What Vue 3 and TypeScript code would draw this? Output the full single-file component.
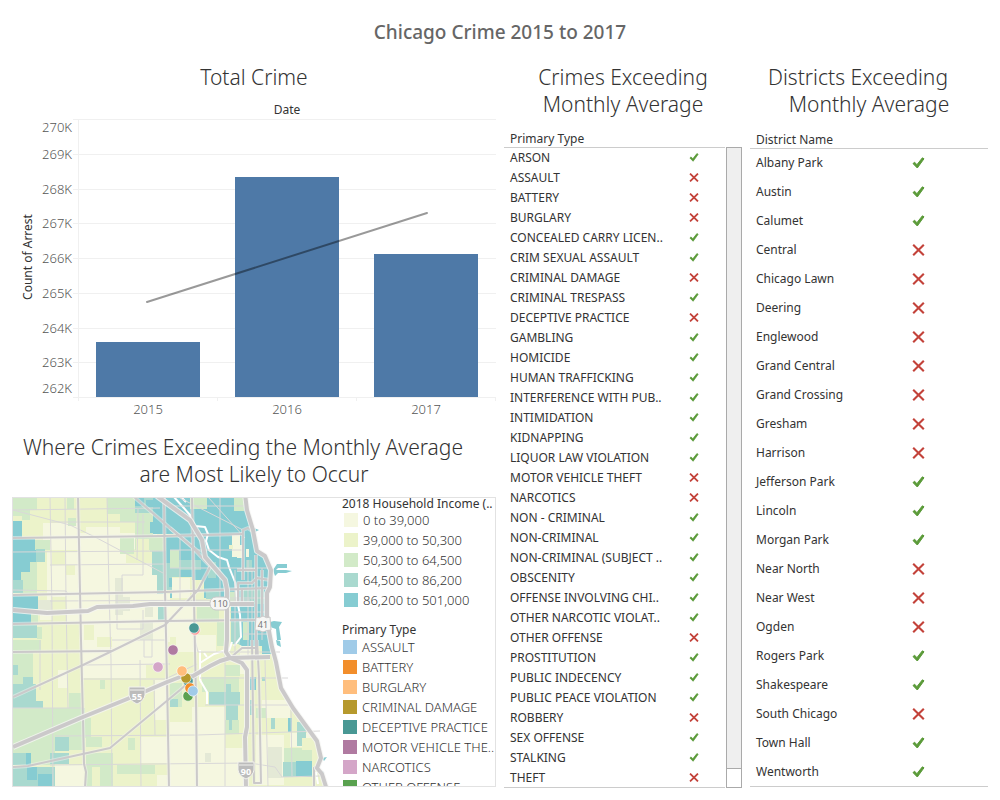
<script setup lang="ts">
interface Mark { name: string; ok: boolean }

const parse = (src: string): Mark[] =>
  src.split('|').map((s) => ({ name: s.slice(1), ok: s[0] === '+' }))

const crimes = parse(
  '+ARSON|-ASSAULT|-BATTERY|-BURGLARY|+CONCEALED CARRY LICEN..|+CRIM SEXUAL ASSAULT|-CRIMINAL DAMAGE|+CRIMINAL TRESPASS|-DECEPTIVE PRACTICE|+GAMBLING|+HOMICIDE|+HUMAN TRAFFICKING|+INTERFERENCE WITH PUB..|+INTIMIDATION|+KIDNAPPING|+LIQUOR LAW VIOLATION|-MOTOR VEHICLE THEFT|-NARCOTICS|+NON - CRIMINAL|+NON-CRIMINAL|+NON-CRIMINAL (SUBJECT ..|+OBSCENITY|+OFFENSE INVOLVING CHI..|+OTHER NARCOTIC VIOLAT..|-OTHER OFFENSE|+PROSTITUTION|+PUBLIC INDECENCY|+PUBLIC PEACE VIOLATION|-ROBBERY|+SEX OFFENSE|+STALKING|-THEFT'
)
const districts = parse(
  '+Albany Park|+Austin|+Calumet|-Central|-Chicago Lawn|-Deering|-Englewood|-Grand Central|-Grand Crossing|-Gresham|-Harrison|+Jefferson Park|+Lincoln|+Morgan Park|-Near North|-Near West|-Ogden|+Rogers Park|+Shakespeare|-South Chicago|+Town Hall|+Wentworth'
)

const grid = [28, 63, 98, 132, 167, 202, 237, 271, 306]
const ticks = [
  { t: '270K', y: 41 }, { t: '269K', y: 68 }, { t: '268K', y: 103 },
  { t: '267K', y: 137 }, { t: '266K', y: 172 }, { t: '265K', y: 207 },
  { t: '264K', y: 242 }, { t: '263K', y: 276 }, { t: '262K', y: 302 },
]
const bars = [
  { year: '2015', x: 84, y: 251 },
  { year: '2016', x: 223, y: 86 },
  { year: '2017', x: 362, y: 163 },
]

const incomes = [
  { c: '#f5f7e0', t: '0 to 39,000' },
  { c: '#ecf3ca', t: '39,000 to 50,300' },
  { c: '#d2eac8', t: '50,300 to 64,500' },
  { c: '#a9d9cf', t: '64,500 to 86,200' },
  { c: '#86ccd2', t: '86,200 to 501,000' },
]
const types = [
  { c: '#a0cbe8', t: 'ASSAULT' },
  { c: '#f28e2b', t: 'BATTERY' },
  { c: '#ffbe7d', t: 'BURGLARY' },
  { c: '#b6992d', t: 'CRIMINAL DAMAGE' },
  { c: '#499894', t: 'DECEPTIVE PRACTICE' },
  { c: '#b07aa1', t: 'MOTOR VEHICLE THE..' },
  { c: '#d4a6c8', t: 'NARCOTICS' },
  { c: '#59a14f', t: 'OTHER OFFENSE' },
]

const shades = ['#e4e9d6', '#f5f7e0', '#ecf3ca', '#d2eac8', '#a9d9cf', '#86ccd2']
// Census blocks: shade index, x, y, width, height
const blocks: number[][] = [
  [1, 80, 533, 77, 118], [1, 47, 552, 33, 48], [1, 43, 523, 37, 27], [1, 86, 527, 34, 10], [1, 157, 594, 37, 48],
  [1, 40, 600, 13, 20], [1, 66, 596, 14, 27], [1, 83, 640, 63, 38], [1, 146, 640, 22, 25], [1, 145, 572, 13, 60],
  [2, 52, 550, 13, 15], [2, 126, 549, 26, 14], [2, 66, 565, 9, 10], [2, 52, 597, 14, 26], [2, 84, 625, 10, 15],
  [3, 13, 497, 24, 13], [3, 22, 510, 8, 10], [3, 13, 510, 9, 6], [3, 67, 497, 7, 12], [3, 68, 518, 8, 8],
  [5, 13, 521, 9, 16], [3, 35, 540, 15, 10], [5, 13, 539, 22, 23], [5, 33, 550, 4, 12], [4, 36, 549, 9, 13],
  [5, 13, 562, 17, 10], [3, 20, 572, 17, 22], [3, 30, 562, 7, 10], [5, 13, 572, 8, 8], [4, 13, 580, 10, 13],
  [5, 13, 596, 25, 13], [0, 38, 600, 14, 10], [5, 13, 612, 18, 11], [3, 31, 613, 7, 10], [4, 13, 625, 24, 13], [3, 37, 627, 5, 12],
  [3, 107, 497, 28, 17], [3, 120, 513, 22, 9], [4, 135, 497, 18, 18], [3, 135, 513, 18, 37], [2, 136, 539, 13, 13],
  [3, 120, 538, 14, 16], [3, 150, 536, 16, 16], [5, 153, 497, 34, 37], [5, 135, 497, 9, 9], [5, 146, 500, 9, 7], [5, 150, 522, 15, 11],
  [5, 166, 537, 20, 28], [4, 152, 551, 14, 24], [4, 157, 573, 8, 21], [4, 166, 563, 16, 27], [5, 169, 578, 9, 9],
  [5, 170, 593, 9, 7], [4, 158, 607, 7, 13], [0, 115, 578, 8, 37], [0, 123, 597, 7, 14], [0, 140, 621, 13, 19], [0, 145, 607, 8, 10],
  [2, 97, 637, 15, 10],
  [3, 13, 640, 20, 54], [3, 33, 640, 8, 12], [4, 13, 665, 5, 10], [4, 13, 684, 23, 24], [4, 23, 677, 10, 9], [4, 30, 701, 13, 7],
  [3, 13, 708, 72, 42], [3, 13, 750, 42, 15], [3, 69, 693, 12, 16], [1, 58, 670, 10, 18], [2, 43, 700, 26, 8],
  [3, 83, 718, 8, 20], [4, 55, 737, 14, 14], [4, 13, 753, 18, 12], [5, 26, 753, 5, 12], [4, 50, 753, 19, 11],
  [4, 13, 767, 42, 20], [5, 27, 767, 10, 13], [5, 38, 774, 14, 13], [1, 55, 765, 29, 22], [3, 86, 753, 27, 34], [3, 86, 737, 16, 10],
  [2, 92, 767, 8, 20], [3, 117, 765, 38, 9], [3, 128, 738, 7, 12], [1, 140, 737, 40, 26], [1, 155, 680, 12, 40], [1, 157, 775, 40, 12],
  [3, 100, 680, 5, 9], [3, 170, 683, 12, 24], [4, 170, 699, 8, 8],
  [1, 170, 707, 27, 28], [2, 170, 707, 22, 15], [1, 170, 735, 27, 52], [1, 198, 707, 27, 80], [3, 202, 677, 23, 15],
  [4, 209, 692, 31, 13], [3, 225, 677, 14, 15], [4, 226, 684, 5, 8], [4, 226, 705, 12, 15], [3, 225, 720, 14, 14], [4, 229, 720, 3, 10],
  [2, 225, 735, 15, 13], [1, 225, 748, 20, 39], [0, 205, 753, 6, 9], [1, 240, 640, 10, 34], [3, 225, 665, 15, 11],
  [1, 262, 700, 28, 18], [1, 256, 735, 28, 50], [2, 262, 660, 12, 38], [3, 256, 708, 10, 10], [5, 250, 677, 6, 13], [4, 262, 677, 3, 4],
  [4, 250, 700, 3, 15], [4, 271, 718, 4, 11], [5, 288, 718, 4, 14], [1, 290, 733, 24, 14], [3, 284, 748, 28, 14],
  [4, 283, 762, 14, 15], [5, 296, 761, 16, 16], [3, 285, 748, 7, 6], [0, 268, 747, 14, 31], [4, 297, 722, 9, 24], [2, 302, 738, 12, 12],
]
// Patches drawn over the downtown area
const downtown: number[][] = [
  [3, 190, 497, 17, 12], [3, 234, 497, 10, 14], [1, 232, 535, 8, 22], [1, 237, 545, 6, 13], [2, 229, 545, 4, 4], [1, 246, 549, 3, 8],
  [3, 170, 550, 9, 18], [4, 179, 560, 22, 10], [2, 172, 577, 20, 14], [1, 172, 578, 18, 20], [2, 190, 580, 14, 24], [4, 208, 562, 8, 16],
  [2, 170, 598, 54, 54], [1, 170, 607, 23, 30], [3, 197, 607, 22, 15], [2, 204, 622, 14, 14], [3, 217, 622, 9, 24], [1, 176, 635, 40, 17],
  [3, 230, 592, 9, 13], [4, 231, 622, 9, 22], [4, 242, 590, 22, 14], [3, 243, 622, 6, 18], [4, 206, 590, 14, 9], [4, 246, 560, 6, 12],
]

const coast = 'M245 494L247 510L253 530L257 551L265 556L271 570L270 587L267 593L267 620L272 647L276 662L281 688L293 708L317 741L321 758L317 768L322 774L327 790'
const minor = [
  'M13 510L160 508', 'M50 522L145 522', 'M13 552L164 551', 'M50 565L164 564', 'M13 590L66 591L68 594', 'M50 601L250 600',
  'M50 497L52 610L53 787', 'M65 497L66 600L68 708', 'M107 497L109 590L111 660L112 787', 'M138 509L137 560', 'M143 514L143 575H122V592', 'M117 594V629H143V610',
  'M13 510L70 525L95 537L163 573', 'M83 679L165 679L176 674L197 664', 'M13 708L83 708', 'M55 736L197 735L320 731', 'M50 765L250 763L275 767L282 777L320 776',
  'M140 660L141 787', 'M154 680L155 735', 'M83 665L170 664', 'M144 640V657H152V640', 'M198 652H280', 'M200 678H288', 'M205 705H292', 'M225 640V787',
  'M265 660L268 787', 'M291 710L292 776', 'M220 497V600', 'M180 535V600', 'M170 506H245', 'M170 550L243 550', 'M170 568H270', 'M180 498L243 530', 'M208 497L245 538',
  'M235 570V660', 'M248 560V660', 'M252 568V650', 'M262 568V640', 'M228 598H267', 'M228 612H267', 'M243 634H268', 'M195 640L198 652', 'M40 640V690', 'M112 640H165',
]
const medium = [
  'M133 496L163 522L192 547L210 566', 'M170 528L200 553', 'M13 538L164 536L243 534', 'M13 595L165 592L270 588', 'M13 624L165 621L267 620',
  'M13 652L112 651', 'M13 697L83 665L110 652L165 625L180 609L198 590L210 567', 'M13 767L28 766L110 748L180 690L197 675',
  'M78 497L80 590L81 640L83 720L84 764L86 772L85 787', 'M164 497L165 590L167 680L169 787', 'M192 497L194 600L196 700L197 787',
  'M243 580V530L248 528L254 532', 'M256 555V660', 'M252 640L254 783H261L259 677L257 640', 'M237 570H257', 'M238 604V583H252L257 578L270 580',
  'M242 590V604', 'M262 570V620', 'M267 593V620', 'M230 658L242 648H257', 'M314 787V768L318 766',
]
const major = [
  'M13 610L47 613L88 611L97 607L133 606L150 604L254 604',
  'M13 747L83 717L137 695L167 682L180 677L193 676L210 666L220 661L230 658L270 657',
  'M157 496L190 520L202 540L205 557L225 580L227 590L227 640L226 652L230 658L242 663L247 670L247 727L245 737L246 787',
]
const river = [
  'M173 496L183 507L190 515L195 526L205 527L208 534L206 541L209 550L218 557L227 560L229 567L235 582L237 600L240 615L241 637L234 646',
  'M229 649L214 654L200 663V680L207 692V704', 'M200 663V650', 'M207 657L204 653', 'M232 642L229 651', 'M316 772L318 784', 'M180 496L186 502',
]
const dots = [
  { x: 195, y: 630, c: '#ff9d9a' }, { x: 194, y: 628, c: '#499894' }, { x: 173, y: 650, c: '#b07aa1' },
  { x: 158, y: 667, c: '#d4a6c8' }, { x: 188, y: 681, c: '#499894' }, { x: 186, y: 678, c: '#b6992d' },
  { x: 182, y: 671, c: '#ffbe7d' }, { x: 188, y: 696, c: '#59a14f' }, { x: 190, y: 688, c: '#f28e2b' }, { x: 193, y: 691, c: '#a0cbe8' },
]
const check = 'M1 6.6L2.6 5.2L4.9 7.7L10.4 0.8L12 1.8L5.3 11Z'
const cross = 'M1.2 0.8L11.8 11.2M11.8 0.8L1.2 11.2'
</script>

<template>
  <div class="page">
    <h1>Chicago Crime 2015 to 2017</h1>
    <main class="board">
      <div class="left">
        <section>
          <h2>Total Crime</h2>
          <svg class="chart" viewBox="0 0 484 330" role="img" aria-label="Total crime by year">
            <text class="caption" x="275" y="23" text-anchor="middle">Date</text>
            <text class="caption" transform="translate(20 166) rotate(-90)" text-anchor="middle">Count of Arrest</text>
            <path v-for="y in grid" :key="y" class="line" :d="`M61 ${y + 0.5}H484`" />
            <path class="line" d="M66.5 28V310M205.5 306V310M344.5 306V310M483.5 306V310" />
            <text v-for="k in ticks" :key="k.t" class="tick" x="60" :y="k.y" text-anchor="end">{{ k.t }}</text>
            <g v-for="b in bars" :key="b.year">
              <rect :x="b.x" :y="b.y" width="104" :height="306 - b.y" fill="#4e79a7" />
              <text class="tick" :x="b.x + 52" y="323" text-anchor="middle">{{ b.year }}</text>
            </g>
            <path d="M135 211L415 122" stroke="#000" stroke-opacity="0.4" stroke-width="2" stroke-linecap="round" />
          </svg>
        </section>
        <section class="where">
          <h2><span class="short">Where Crimes Exceeding the Monthly Average</span><span>are Most Likely to Occur</span></h2>
          <div class="mapbox">
            <svg class="map" viewBox="13 498 328 288" role="img" aria-label="Map of Chicago household income">
              <defs>
                <clipPath id="land"><path :d="coast + 'L0 790V490Z'" /></clipPath>
              </defs>
              <path :d="coast + 'L0 790V490Z'" fill="#ecf3ca" />
              <g clip-path="url(#land)">
                <rect v-for="(b, i) in blocks" :key="i" :x="b[1]" :y="b[2]" :width="b[3]" :height="b[4]" :fill="shades[b[0]]" />
                <path d="M180 494H260L280 570L268 600L285 654H262V646H242L231 640V600H205L180 590Z" fill="#86ccd2" />
                <rect v-for="(b, i) in downtown" :key="'d' + i" :x="b[1]" :y="b[2]" :width="b[3]" :height="b[4]" :fill="shades[b[0]]" />
              </g>
              <g fill="#86ccd2">
                <path d="M273 570L277 564H287V568H278L276 570H286L292 571L286 573H278L275 576Z" />
                <path d="M270 622L274 621L282 622L279 627L281 640H277L276 629L270 627Z" />
                <path d="M276 640L280 641L281 647L277 645ZM254 528L259 530L255 532ZM322 758L327 757L324 761ZM318 770L324 772L321 776Z" />
              </g>
              <g class="stroke">
                <path v-for="d in river" :key="d" :d="d" stroke="#fff" stroke-width="2" />
                <path v-for="d in minor" :key="d" :d="d" stroke="#d9d8d8" stroke-width="1" />
                <path v-for="d in medium" :key="'c' + d" :d="d" stroke="#f3f3f0" stroke-width="4" stroke-opacity="0.5" />
                <path v-for="d in medium" :key="d" :d="d" stroke="#cbc9ca" stroke-width="2" />
                <path v-for="d in [...major, coast]" :key="'c' + d" :d="d" stroke="#f5f5f2" stroke-width="6" stroke-opacity="0.8" />
                <path v-for="d in major" :key="d" :d="d" stroke="#cbc9ca" stroke-width="4" />
                <path :d="coast" stroke="#cbc9ca" stroke-width="4" />
              </g>
              <g fill="#f6f6f4" stroke="#c9c9c9">
                <rect x="210" y="597" width="20" height="13" rx="6" />
                <path d="M256 617Q259 619 263 616Q267 619 270 617L271 630Q267 630 263 632Q259 630 255 630Z" />
              </g>
              <path d="M129 687H145V695Q144 701 137 704Q130 701 129 695ZM238 762H254V770Q253 776 246 779Q239 776 238 770Z" fill="#bcbcbc" stroke="#f2f2ee" />
              <path d="M130 690H144M239 765H253" stroke="#f2f2ee" />
              <g class="shield">
                <text x="220" y="607">110</text><text x="263" y="628">41</text>
                <text class="inv" x="137" y="700">55</text><text class="inv" x="246" y="775">90</text>
              </g>
              <circle v-for="(p, i) in dots" :key="i" :cx="p.x" :cy="p.y" r="5.2" :fill="p.c" stroke="#fff" stroke-opacity="0.6" stroke-width="1" />
            </svg>
            <div class="legends">
              <h3>2018 Household Income (..</h3>
              <ul>
                <li v-for="l in incomes" :key="l.t"><i :style="{ background: l.c }"></i>{{ l.t }}</li>
              </ul>
              <h3 class="second">Primary Type</h3>
              <ul class="types">
                <li v-for="l in types" :key="l.t"><i :style="{ background: l.c }"></i>{{ l.t }}</li>
              </ul>
            </div>
          </div>
        </section>
      </div>

      <section class="column">
        <h2><span>Crimes Exceeding</span><span>Monthly Average</span></h2>
        <div class="scroller">
          <table class="crimes">
            <thead><tr><th scope="col">Primary Type</th><td></td></tr></thead>
            <tbody>
              <tr v-for="c in crimes" :key="c.name">
                <th scope="row">{{ c.name }}</th>
                <td>
                  <svg width="10" height="9" viewBox="0 0 13 12" role="img" :aria-label="c.ok ? 'Above average' : 'Below average'">
                    <path v-if="c.ok" :d="check" fill="#5a9a38" stroke="#5a9a38" />
                    <path v-else :d="cross" stroke="#c3423a" stroke-width="2.4" />
                  </svg>
                </td>
              </tr>
            </tbody>
          </table>
          <div class="track"><div class="thumb"></div></div>
        </div>
      </section>

      <section class="column">
        <h2><span class="short">Districts Exceeding</span><span>Monthly Average</span></h2>
        <table class="districts">
          <thead><tr><th scope="col">District Name</th><td></td></tr></thead>
          <tbody>
            <tr v-for="d in districts" :key="d.name">
              <th scope="row">{{ d.name }}</th>
              <td>
                <svg width="13" height="12" viewBox="0 0 13 12" role="img" :aria-label="d.ok ? 'Above average' : 'Below average'">
                  <path v-if="d.ok" :d="check" fill="#5a9a38" stroke="#5a9a38" />
                  <path v-else :d="cross" stroke="#c3423a" stroke-width="2.1" />
                </svg>
              </td>
            </tr>
          </tbody>
        </table>
      </section>
    </main>
  </div>
</template>

<style>
body { margin: 0; background: #fff; }
</style>

<style scoped>
.page {
  box-sizing: border-box;
  padding: 0 12px 12px;
  font-family: "Noto Sans", "Open Sans", sans-serif;
  font-size: 12px;
  color: #333;
}
h1 { margin: 0; line-height: 64px; font-size: 19px; font-weight: 500; color: #666; text-align: center; }
.board { display: grid; grid-template-columns: minmax(0, 242fr) minmax(0, 119fr) minmax(0, 119fr); gap: 8px; align-items: start; }
h2 { margin: 0; font-size: 21px; line-height: 27px; font-weight: 300; text-align: center; white-space: nowrap; }
h2 span { display: block; }
.short { padding-right: 22px; }
.chart { display: block; width: 100%; fill: none; }
.chart text { font-size: 12px; }
.chart .caption { fill: #333; }
.chart .tick { font-size: 13px; font-weight: 300; fill: #555; }
.line { stroke: #f0f0f0; }
.where { padding-top: 13px; }
.mapbox { display: grid; grid-template-columns: 328fr 154fr; margin-top: 9px; border: 1px solid #e2e2e2; overflow: hidden; }
.map { display: block; width: 100%; }
.stroke { fill: none; stroke-linejoin: round; }
.shield { font-size: 9px; text-anchor: middle; fill: #777; }
.shield .inv { fill: #fff; font-weight: 700; }
.legends { height: 0; min-height: 100%; overflow: hidden; white-space: nowrap; }
h3 { margin: 0; padding-left: 1px; font-size: 12px; line-height: 12px; font-weight: 400; }
h3.second { margin-top: 13px; line-height: 14px; }
ul { margin: 0; padding: 0; list-style: none; }
li { display: flex; align-items: center; gap: 5px; height: 20px; padding-left: 3px; font-size: 13px; font-weight: 300; }
.types li { padding-left: 2px; }
li i { width: 14px; height: 14px; }
table { width: 100%; table-layout: fixed; border-collapse: collapse; border-bottom: 1px solid #ccc; }
thead tr { border-bottom: 1px solid #ccc; }
th, td { padding: 0; font-weight: 400; text-align: left; white-space: nowrap; }
th { padding-left: 6px; }
td { text-align: center; }
td svg { display: block; margin: 0 auto; fill: none; }
thead th { height: 29px; vertical-align: bottom; line-height: 17px; }
.crimes tbody tr { height: 20px; }
.crimes td { width: 62px; }
.districts thead th { height: 30px; }
.districts tbody tr { height: 29px; }
.districts tbody th { padding-bottom: 1px; }
.districts td { width: 58%; }
.scroller { display: flex; gap: 1px; }
.track { box-sizing: border-box; flex: 0 0 16px; display: flex; flex-direction: column; margin-top: 29px; border: 1px solid #aaa; background: #fff; }
.thumb { flex: 0 1 97%; background: #efefef; border-bottom: 1px solid #aaa; }
</style>
